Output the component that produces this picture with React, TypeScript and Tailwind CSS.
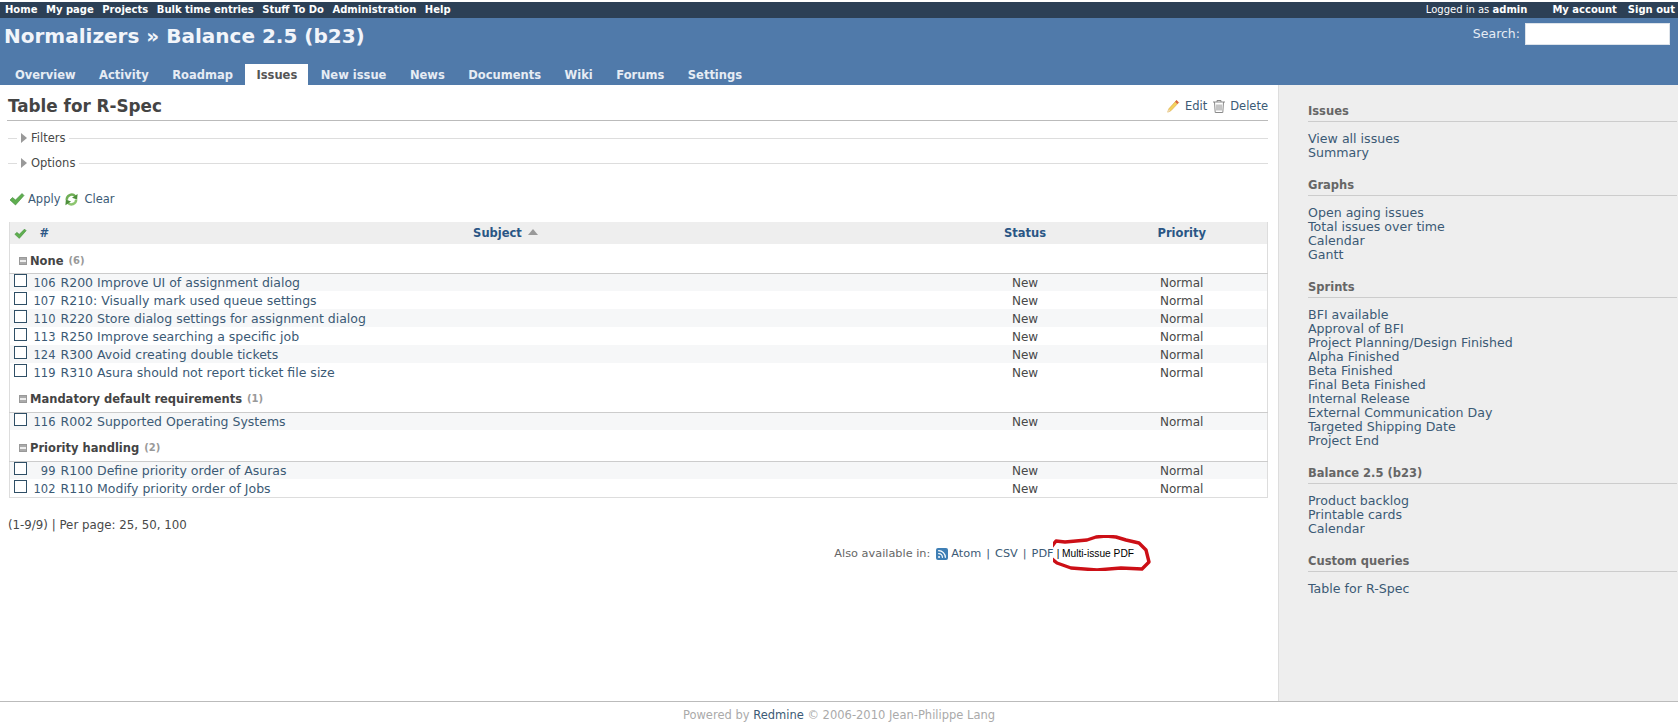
import { Rss } from "lucide-react";

const topLeft = ["Home", "My page", "Projects", "Bulk time entries", "Stuff To Do", "Administration", "Help"];
const tabs = ["Overview", "Activity", "Roadmap", "Issues", "New issue", "News", "Documents", "Wiki", "Forums", "Settings"];

const groups = [
  {
    name: "None",
    count: 6,
    rows: [
      ["106", "R200 Improve UI of assignment dialog"],
      ["107", "R210: Visually mark used queue settings"],
      ["110", "R220 Store dialog settings for assignment dialog"],
      ["113", "R250 Improve searching a specific job"],
      ["124", "R300 Avoid creating double tickets"],
      ["119", "R310 Asura should not report ticket file size"],
    ],
  },
  { name: "Mandatory default requirements", count: 1, rows: [["116", "R002 Supported Operating Systems"]] },
  {
    name: "Priority handling",
    count: 2,
    rows: [
      ["99", "R100 Define priority order of Asuras"],
      ["102", "R110 Modify priority order of Jobs"],
    ],
  },
];

const sidebar = [
  { title: "Issues", links: ["View all issues", "Summary"] },
  { title: "Graphs", links: ["Open aging issues", "Total issues over time", "Calendar", "Gantt"] },
  {
    title: "Sprints",
    links: [
      "BFI available",
      "Approval of BFI",
      "Project Planning/Design Finished",
      "Alpha Finished",
      "Beta Finished",
      "Final Beta Finished",
      "Internal Release",
      "External Communication Day",
      "Targeted Shipping Date",
      "Project End",
    ],
  },
  { title: "Balance 2.5 (b23)", links: ["Product backlog", "Printable cards", "Calendar"] },
  { title: "Custom queries", links: ["Table for R-Spec"] },
];

function Check({ size = 16 }: { size?: number }) {
  return (
    <svg width={size} height={size} viewBox="0 0 16 16" className="shrink-0">
      <path d="M1 9l2.5-2.5L6.5 9 13 2.5 15 4.5 6.5 14z" fill="#5fae4f" stroke="#3f8a3a" strokeWidth="0.6" />
    </svg>
  );
}

function Reload() {
  return (
    <svg width="15" height="15" viewBox="0 0 16 16" fill="none" className="shrink-0">
      <path d="M3 8.5A5.2 5.2 0 0 1 12 4.5" stroke="#6fae55" strokeWidth="2.6" />
      <path d="M14.5 2l-.5 6-5.5-2z" fill="#4d8f3b" />
      <path d="M13 8A5.2 5.2 0 0 1 4 11.5" stroke="#8cc56f" strokeWidth="2.6" />
      <path d="M1.5 14l.5-6 5.5 2z" fill="#4d8f3b" />
    </svg>
  );
}

function Pencil() {
  return (
    <svg width="14" height="14" viewBox="0 0 16 16" className="shrink-0">
      <path d="M12 1.5l2.5 2.5-9 9.5-3.5 1.5 1-3.5z" fill="#f4d35e" stroke="#d9a441" strokeWidth="0.7" />
      <path d="M12 1.5l2.5 2.5-1.6 1.7-2.5-2.5z" fill="#d9634a" />
      <path d="M2 15l1-3.5 2 2z" fill="#eed9b8" />
    </svg>
  );
}

function Trash() {
  return (
    <svg width="16" height="16" viewBox="0 0 16 16" fill="none" stroke="#8a8a8a" className="shrink-0">
      <path d="M2 4h12M6 4V2.5h4V4M3.5 4l.7 10.5h7.6L12.5 4M6 6.5v6M8 6.5v6M10 6.5v6" />
    </svg>
  );
}

function Minus() {
  return (
    <span className="w-[8px] h-[8px] bg-[#aaa] border border-[#999] flex items-center justify-center shrink-0">
      <span className="w-[6px] h-[2px] bg-[#eee]" />
    </span>
  );
}

function Legend({ label }: { label: string }) {
  return (
    <div className="flex items-center h-[14px] text-[11.5px]">
      <span className="w-[9px] h-px bg-[#ddd] ml-[1px]" />
      <span className="w-0 h-0 ml-[4px] mr-[3px] border-y-[5px] border-y-transparent border-l-[6px] border-l-[#999]" />
      <span className="text-[#484848] mx-[1px]">{label}</span>
      <span className="flex-1 h-px bg-[#ddd] ml-[3px]" />
    </div>
  );
}

export default function App() {
  return (
    <div className="h-[726px] flex flex-col bg-white text-[12px] leading-[14px] text-[#484848] overflow-hidden font-['DejaVu_Sans',sans-serif]">
      <div className="mt-[2px] h-[16px] bg-[#2c4056] text-white font-bold text-[10px] flex items-center justify-between pl-[5px] pr-[3px]">
        <div className="flex gap-[8.5px]">
          {topLeft.map((t) => (
            <span key={t}>{t}</span>
          ))}
        </div>
        <div className="flex gap-[25px]">
          <span className="font-normal">
            Logged in as <b>admin</b>
          </span>
          <div className="flex gap-[11px]">
            <span>My account</span>
            <span>Sign out</span>
          </div>
        </div>
      </div>

      <div className="h-[67px] bg-[#507aaa] text-white flex flex-col justify-between relative">
        <div className="flex justify-between items-start">
          <h1 className="text-[20px] leading-[24px] font-bold ml-[4px] mt-[6px] text-[#f2f5fa]">Normalizers » Balance 2.5 (b23)</h1>
          <div className="flex items-center gap-[5px] mt-[5px] mr-[8px]">
            <span className="text-[#e6ecf4] text-[12.5px]">Search:</span>
            <div className="w-[145px] h-[22px] bg-white border border-[#dde3ea]" />
          </div>
        </div>
        <div className="flex gap-[1.5px] ml-[4px] text-[11.5px]">
          {tabs.map((t) => (
            <span
              key={t}
              className={
                "px-[11px] h-[21px] leading-[23px] font-bold " + (t === "Issues" ? "bg-white text-[#555]" : "text-[#e6ecf4]")
              }
            >
              {t}
            </span>
          ))}
        </div>
      </div>

      <div className="flex-1 flex min-h-0">
        <div className="w-[1279px] border-r border-[#ddd] pl-[7px] pr-[10px]">
          <div className="flex justify-between items-end h-[36px] border-b border-[#bbb] pb-[3px]">
            <h2 className="text-[16.8px] leading-[22px] font-bold text-[#444] ml-[1px]">Table for R-Spec</h2>
            <div className="flex items-center mb-[3px] text-[#3b5a75] text-[11.5px]">
              <Pencil />
              <span className="ml-[5px]">Edit</span>
              <span className="ml-[4px]">
                <Trash />
              </span>
              <span className="ml-[3px]">Delete</span>
            </div>
          </div>

          <div className="mt-[10px]">
            <Legend label="Filters" />
          </div>
          <div className="mt-[11px]">
            <Legend label="Options" />
          </div>

          <div className="flex items-center mt-[21px] ml-[2px] h-[16px] text-[#3b5a75] text-[11.5px]">
            <Check />
            <span className="ml-[3px]">Apply</span>
            <span className="ml-[4px]">
              <Reload />
            </span>
            <span className="ml-[5px]">Clear</span>
          </div>

          <table className="mt-[15px] ml-[2px] w-[1258px] table-fixed border-x border-b border-[#ddd] border-collapse">
            <colgroup>
              <col className="w-[24px]" />
              <col className="w-[27px]" />
              <col className="w-[890px]" />
              <col className="w-[149px]" />
              <col className="w-[168px]" />
            </colgroup>
            <thead>
              <tr className="h-[22px] bg-[#eeeeee] text-[#2a5685] font-bold text-[11.5px]">
                <th className="pl-[4px]">
                  <Check size={13} />
                </th>
                <th className="text-left pl-[6px]">#</th>
                <th>
                  Subject
                  <span className="inline-block ml-[6px] mb-[2px] w-0 h-0 border-x-[5px] border-x-transparent border-b-[6px] border-b-[#999]" />
                </th>
                <th>Status</th>
                <th className="pr-[3px]">Priority</th>
              </tr>
            </thead>
            <tbody>
              {groups.map((g, gi) => (
                <Group key={g.name} group={g} first={gi === 0} />
              ))}
            </tbody>
          </table>

          <p className="mt-[20px] ml-[1px] text-[11.8px] text-[#484848]">(1-9/9) | Per page: 25, 50, 100</p>

          <div className="relative flex justify-end items-center mt-[15px] pr-[134px] text-[11.3px]">
            <span className="text-[#666]">Also available in:</span>
            <Rss className="w-[12px] h-[12px] ml-[6px] mr-[3px] bg-[#3f7fb5] text-white rounded-[2px] p-[1px]" strokeWidth={3} />
            <span className="text-[#3b5a75]">Atom</span>
            <span className="text-[#3b5a75] mx-[5px]">|</span>
            <span className="text-[#3b5a75]">CSV</span>
            <span className="text-[#3b5a75] mx-[5px]">|</span>
            <span className="text-[#3b5a75]">PDF</span>
            <span className="text-black font-['Liberation_Sans',sans-serif] text-[10.2px] ml-[3px]">| Multi-issue PDF</span>
            <svg width="102" height="36" viewBox="0 0 102 36" fill="none" className="absolute right-[113px] top-[-12px]">
              <path
                d="M3 6l9 1 11-1 11-1 9-3 10-1 10 1 10 3 13 3 7 7 3 12-7 7-21-1-24 2-26-2-14-5-6-5-2-8z"
                stroke="#cc0f16"
                strokeWidth="3.4"
                strokeLinejoin="round"
              />
            </svg>
          </div>
        </div>

        <aside className="flex-1 bg-[#eeeeee] pl-[29px] pt-[19px] pr-[1px]">
          {sidebar.map((s) => (
            <div key={s.title} className="mb-[18px]">
              <h3 className="text-[11.5px] leading-[14px] font-bold text-[#666] border-b border-[#ccc] pb-[3px] mb-[10px]">{s.title}</h3>
              <div className="flex flex-col text-[12.6px]">
                {s.links.map((l) => (
                  <span key={l} className="text-[#3b5a75] h-[14px]">
                    {l}
                  </span>
                ))}
              </div>
            </div>
          ))}
        </aside>
      </div>

      <div className="h-[25px] border-t border-[#bbb] text-center text-[11.5px] leading-[26px] text-[#aaa]">
        Powered by <span className="text-[#3b5a75]">Redmine</span> © 2006-2010 Jean-Philippe Lang
      </div>
    </div>
  );
}

function Group({ group, first }: { group: (typeof groups)[number]; first: boolean }) {
  return (
    <>
      <tr className={"border-b border-[#ccc] " + (first ? "h-[29px]" : "h-[31px]")}>
        <td colSpan={5} className={"pl-[9px] " + (first ? "pt-[5px]" : "pt-[6px]")}>
          <div className="flex items-center gap-[3px] font-bold text-[#444] text-[11.5px]">
            <Minus />
            <span>{group.name}</span>
            <span className="text-[#999] text-[10px] ml-[2px]">({group.count})</span>
          </div>
        </td>
      </tr>
      {group.rows.map(([id, subject], i) => (
        <tr key={id} className={"h-[18px] text-[#3b5a75] " + (i % 2 === 0 ? "bg-[#f6f7f8]" : "bg-white")}>
          <td className="pl-[4px]">
            <div className="w-[13px] h-[13px] border border-[#2f4f66] bg-white mb-[3px]" />
          </td>
          <td className="text-right pr-[5px] pt-[2px] text-[11.5px]">{id}</td>
          <td className="pt-[2px] text-[12.5px] whitespace-nowrap">{subject}</td>
          <td className="pt-[2px] text-center text-[#484848]">New</td>
          <td className="pt-[2px] text-center text-[#484848] pr-[3px]">Normal</td>
        </tr>
      ))}
    </>
  );
}
